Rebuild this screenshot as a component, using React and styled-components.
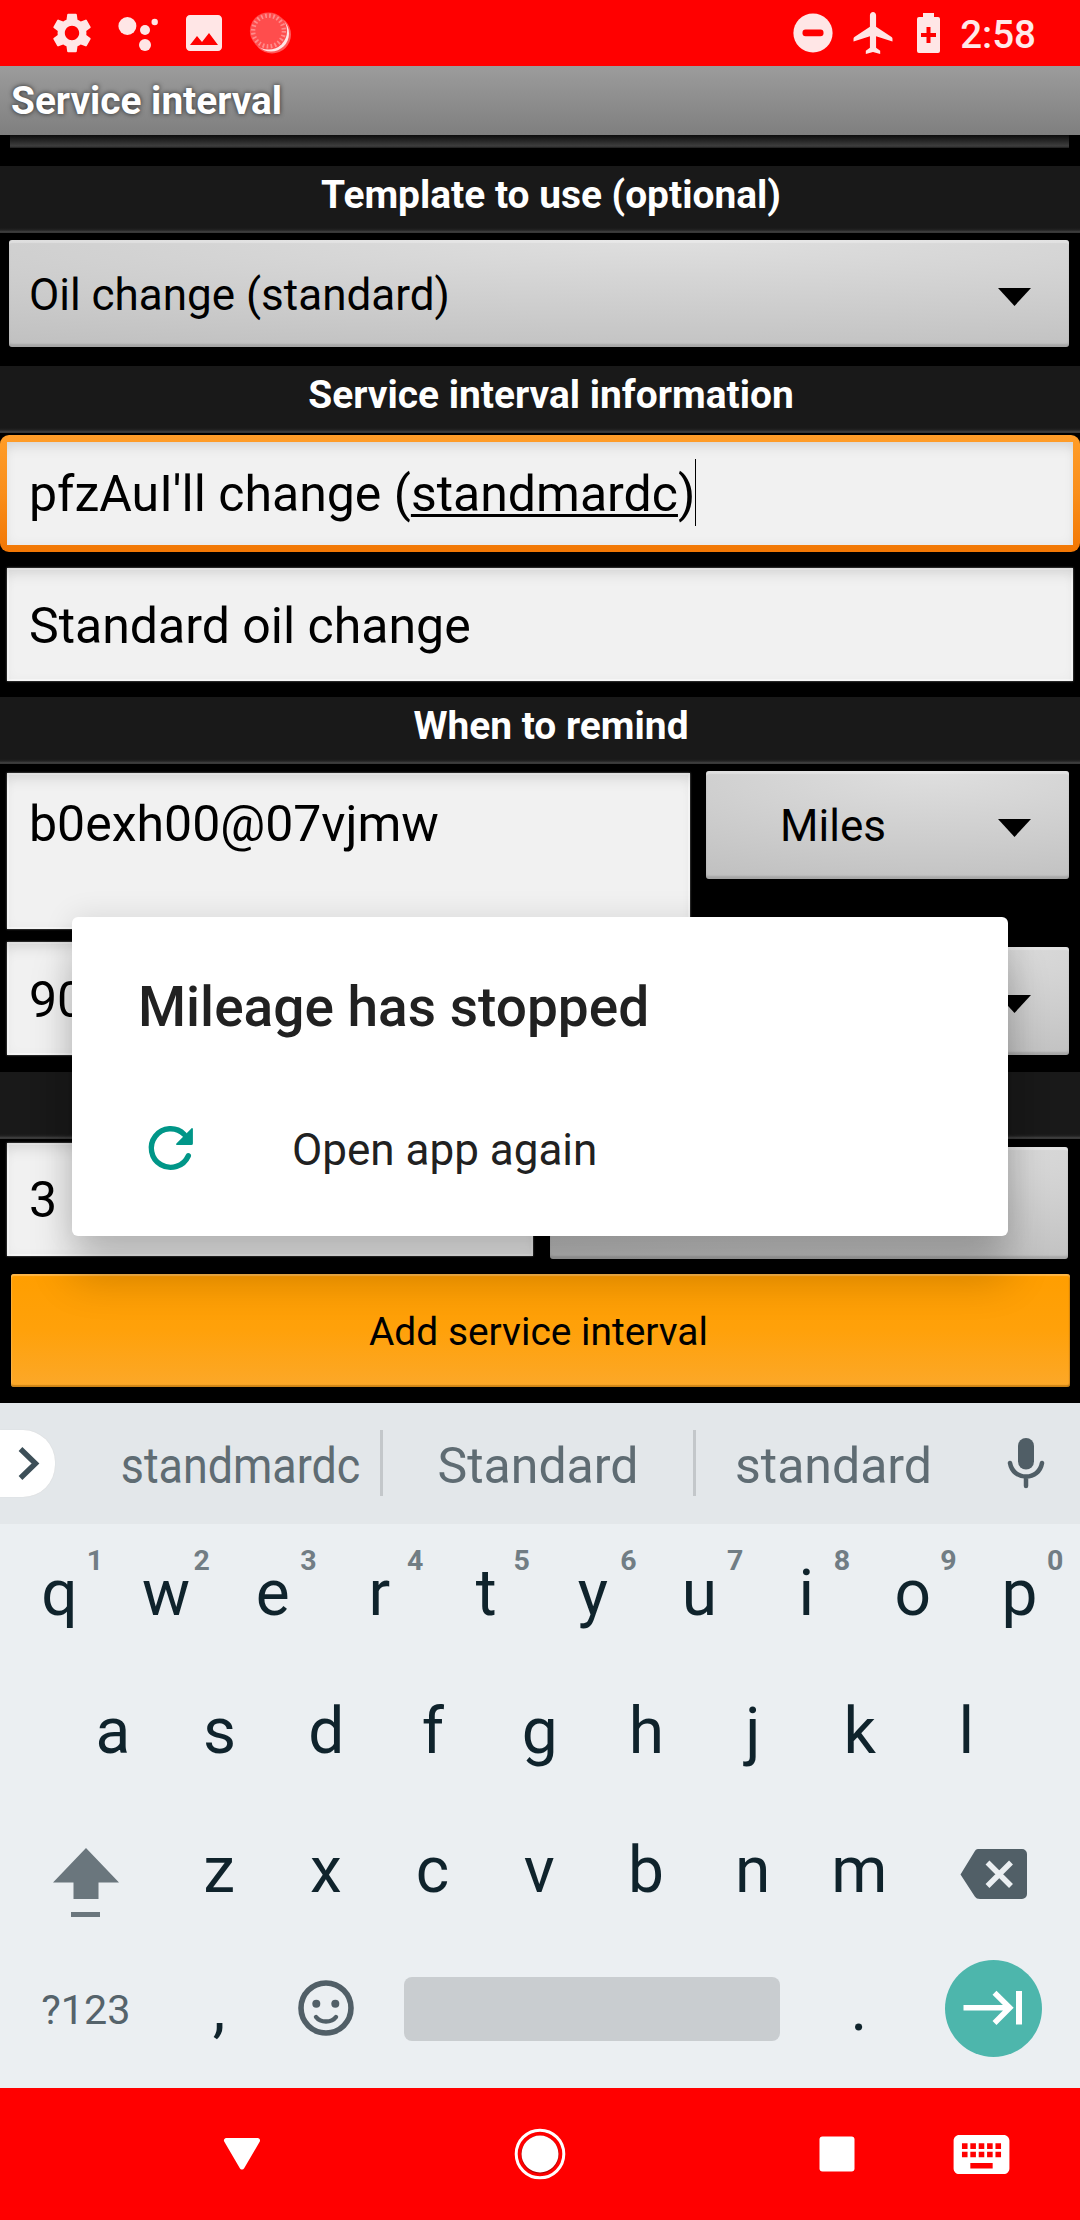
import React from "react";
import styled, { createGlobalStyle, css } from "styled-components";
import { MdSettings, MdPhoto, MdKeyboard } from "react-icons/md";

const GlobalStyle = createGlobalStyle`
  * { box-sizing: border-box; }
  body { margin: 0; background: #000; font-family: Roboto, "Noto Sans", sans-serif; }
  svg { display: block; flex: none; }
`;

const Screen = styled.div`
  position: relative;
  width: 1080px;
  height: 2220px;
  display: flex;
  flex-direction: column;
  background: #000;
  overflow: hidden;
`;

/* ---------- status bar ---------- */

const StatusBar = styled.header`
  height: 66px;
  display: flex;
  justify-content: space-between;
  align-items: center;
  background: #f00;
  color: #ffe6e6;
`;

const StatusGroup = styled.div`
  display: flex;
  align-items: center;
  height: 66px;
  padding-left: ${(p) => p.$start || 0}px;
  padding-right: ${(p) => p.$end || 0}px;
`;

const Clock = styled.span`
  margin-left: 20px;
  padding-top: 3px;
  font-size: 38.5px;
  font-weight: 500;
  line-height: 45px;
  color: #ffe9e9;
`;

/* ---------- app ---------- */

const TitleBar = styled.div`
  height: 69px;
  padding-left: 11px;
  background: linear-gradient(#9c9c9c, #7f7f7f);
  color: #fff;
  font-size: 38.8px;
  font-weight: 700;
  line-height: 69px;
  text-shadow: 0 0 5px rgba(0, 0, 0, 0.75);
`;

const Content = styled.main`
  height: 1268px;
  display: flex;
  flex-direction: column;
  background: #000;
`;

const ScrolledEdge = styled.div`
  height: 13px;
  margin: 0 11px 0 10px;
  background: linear-gradient(#0c0c0c, #3e3e3e 85%, #1c1c1c);
`;

const SectionHeader = styled.h2`
  height: 67px;
  margin: ${(p) => p.$gap}px 0 0;
  padding: 0 0 9px 22px;
  background: linear-gradient(#191919 62px, #222 64px, #444 66px, #2c2c2c 67px);
  color: #fff;
  font-size: 38.9px;
  font-weight: 700;
  line-height: 58px;
  text-align: center;
`;

const FormRow = styled.div`
  display: flex;
  align-items: flex-start;
  margin-top: ${(p) => p.$gap}px;
`;

const bevel = css`
  border-radius: 3px;
  background: radial-gradient(ellipse 125% 108% at 62% 0, #dfdfdf, #c1c1c1);
  box-shadow: inset 0 3px 1px rgba(255, 255, 255, 0.3), inset 0 -3px 2px rgba(0, 0, 0, 0.14);
`;

const Spinner = styled.div`
  ${bevel}
  display: flex;
  align-items: center;
  justify-content: ${(p) => (p.$centered ? "center" : "flex-start")};
  position: relative;
  flex: 1;
  height: ${(p) => p.$height || 108}px;
  margin: ${(p) => p.$drop || 0}px 11px 0 ${(p) => p.$left}px;
  padding: 2px ${(p) => (p.$centered ? 109 : 80)}px 0 ${(p) => (p.$centered ? 0 : 20)}px;
  color: #000;
  font-size: 44px;
  line-height: 52px;
`;

const SpinnerArrow = styled.svg`
  position: absolute;
  right: 38px;
  top: 48px;
`;

const GrayButton = styled.div`
  ${bevel}
  flex: 1;
  height: 112px;
  margin: 4px 12px 0 17px;
`;

const Field = styled.div`
  width: ${(p) => p.$width}px;
  height: ${(p) => p.$height || 113}px;
  margin: ${(p) => p.$drop || 0}px 0 0 7px;
  padding: ${(p) => p.$padTop || 29}px 0 0 22px;
  background: #f1f1f1;
  box-shadow: inset 0 14px 16px -10px rgba(0, 0, 0, 0.13), inset 0 0 12px rgba(0, 0, 0, 0.04),
    inset 0 0 0 2px rgba(255, 255, 255, 0.6), 0 0 2px #777;
  color: #000;
  font-size: 50px;
  line-height: 58px;
  white-space: nowrap;
`;

const FocusRing = styled.div`
  margin-top: 2px;
  height: 117px;
  padding: 7px;
  border-radius: 9px;
  background: linear-gradient(#ff9d29, #f98e1b 50%, #f27704);
`;

const FocusedField = styled.div`
  display: flex;
  align-items: center;
  height: 103px;
  padding: 1px 0 0 22px;
  background: #f1f1f1;
  box-shadow: inset 0 12px 14px -8px rgba(0, 0, 0, 0.1), inset 0 0 12px rgba(0, 0, 0, 0.05);
  color: #000;
  font-size: 50px;
  line-height: 58px;
  white-space: pre;
`;

const Composing = styled.span`
  text-decoration: underline;
  text-decoration-thickness: 3px;
  text-underline-offset: 3px;
  text-decoration-skip-ink: none;
`;

const Caret = styled.span`
  width: 1px;
  height: 67px;
  margin-top: -4px;
  background: #000;
`;

const PrimaryButton = styled.button`
  height: 113px;
  margin: 15px 10px 0 11px;
  padding: 1px 4px 0 0;
  border: 0;
  border-radius: 3px;
  background: linear-gradient(#ff9e00, #ffa10a 50%, #fca829);
  box-shadow: inset 0 2px 1px rgba(255, 210, 140, 0.5), inset 0 -2px 1px rgba(150, 90, 0, 0.45),
    inset 1px 0 1px rgba(255, 210, 140, 0.4), inset -1px 0 1px rgba(150, 90, 0, 0.4);
  color: #000;
  font-family: inherit;
  font-size: 38.9px;
  line-height: 45px;
`;

/* ---------- crash dialog ---------- */

const Dialog = styled.section`
  position: absolute;
  left: 72px;
  top: 917px;
  width: 936px;
  height: 319px;
  padding: 57px 66px 0;
  border-radius: 6px;
  background: #fff;
  box-shadow: 0 42px 44px rgba(0, 0, 0, 0.2), 0 0 30px rgba(0, 0, 0, 0.11);
  color: #212121;
`;

const DialogTitle = styled.h1`
  margin: 0;
  font-size: 55px;
  font-weight: 500;
  line-height: 66px;
`;

const DialogAction = styled.div`
  display: flex;
  align-items: center;
  gap: 88px;
  margin-top: 75px;
  font-size: 44px;
  line-height: 62px;
`;

const ActionLabel = styled.span`
  padding-top: 4px;
`;

/* ---------- keyboard ---------- */

const Keyboard = styled.section`
  height: 685px;
  background: #ebeff2;
`;

const Suggestions = styled.div`
  display: flex;
  align-items: center;
  height: 121px;
  padding-bottom: 1px;
  background: #e3e7ea;
`;

const Expand = styled.div`
  width: 55px;
  height: 67px;
  margin-right: 43px;
  padding: 17px 0 0 16px;
  border-radius: 0 32px 32px 0;
  background: #fff;
  box-shadow: 0 0 1px #ccc;
`;

const Suggestion = styled.div`
  display: flex;
  justify-content: center;
  width: ${(p) => p.$width}px;
  padding-top: 5px;
  color: #5f6c73;
  font-size: 50px;
  line-height: 58px;
`;

const Squeezed = styled.span`
  margin-left: 4px;
  transform: scaleX(0.897);
`;

const Divider = styled.div`
  width: 3px;
  height: 66px;
  background: #c3c7ca;
`;

const KeyRow = styled.div`
  display: flex;
  height: ${(p) => p.$height || 138}px;
  padding-left: ${(p) => p.$inset || 6}px;
`;

const Key = styled.div`
  position: relative;
  display: flex;
  flex: none;
  align-items: center;
  justify-content: center;
  width: ${(p) => p.$width || 106.7}px;
`;

const KeyLabel = styled.span`
  padding-top: 2px;
  color: #0f232c;
  font-size: 64px;
  line-height: 74px;
`;

const Hint = styled.span`
  position: absolute;
  top: 20px;
  left: 69px;
  width: 40px;
  text-align: center;
  color: #717d84;
  font-size: 28.5px;
  font-weight: 700;
  line-height: 34px;
`;

const SymbolsLabel = styled.span`
  padding-top: 4px;
  color: #55636b;
  font-size: 41.3px;
  line-height: 50px;
`;

const SpaceBar = styled.div`
  width: 376px;
  height: 64px;
  margin-top: 2px;
  border-radius: 8px;
  background: #c9cdd0;
`;

const EnterButton = styled.div`
  display: flex;
  align-items: center;
  justify-content: center;
  width: 97px;
  height: 97px;
  border-radius: 50%;
  background: #4db6ac;
`;

/* ---------- navigation bar ---------- */

const NavBar = styled.nav`
  display: flex;
  align-items: center;
  height: 132px;
  padding-left: 222px;
  background: #f00;
  color: #fff;
`;

const NavSlot = styled.div`
  margin-left: ${(p) => p.$gap || 0}px;
`;

const AssistantIcon = () => (
  <svg width="48" height="48" viewBox="114 9 48 48" fill="currentColor">
    <circle cx="127.4" cy="26" r="9" />
    <circle cx="145" cy="30" r="5" />
    <circle cx="154.7" cy="22" r="3.2" />
    <circle cx="145" cy="45" r="6" />
  </svg>
);

const SyncDisc = () => (
  <svg width="48" height="48" viewBox="0 0 48 48">
    <circle cx="26" cy="25.5" r="19" fill="#ff5a5a" />
    <circle cx="25" cy="24.5" r="18" fill="#ffe6e6" />
    <circle cx="22.5" cy="22" r="18.6" fill="#ff4d4d" />
    <circle cx="22.5" cy="22" r="15.4" fill="none" stroke="#ff8c8c" strokeWidth="4.4" strokeDasharray="1.7 2.34" />
  </svg>
);

const DoNotDisturb = () => (
  <svg width="40" height="40" viewBox="0 0 40 40">
    <circle cx="20" cy="20" r="19.6" fill="currentColor" />
    <rect x="9.5" y="16.6" width="21" height="6.6" rx="3" fill="#f00" />
  </svg>
);

const Airplane = () => (
  <svg width="40" height="42" viewBox="1.75 2 19.5 20" preserveAspectRatio="none" fill="currentColor">
    <path d="M21 16v-1.3c0-.4-.15-.6-.45-.8L13 9V3.5c0-.83-.67-1.5-1.5-1.5S10 2.67 10 3.5V9l-7.55 4.9c-.3.2-.45.4-.45.8V16l8-2.5V19l-2 1.5V22l3.5-1 3.5 1v-1.5L13 19v-5.5l8 2.5z" />
  </svg>
);

const Battery = () => (
  <svg width="23" height="40" viewBox="0 0 23 40">
    <path fill="currentColor" d="M6 0h11v4h4a2 2 0 0 1 2 2v32a2 2 0 0 1-2 2H2a2 2 0 0 1-2-2V6a2 2 0 0 1 2-2h4z" />
    <path fill="#f00" d="M9.5 14h4v6H19v4h-5.5v6h-4v-6H4v-4h5.500z" />
  </svg>
);

const ReopenIcon = () => (
  <svg width="66" height="66" viewBox="138 1115 66 66">
    <path
      d="M188.300 1155.800A19.300 19.300 0 1 1 184.200 1134.300"
      fill="none"
      stroke="#009688"
      strokeWidth="5.400"
      strokeLinecap="round"
    />
    <path
      fill="#009688"
      d="M176.400 1143.400l15-15c.6-.6 1.500-.2 1.500.7v14.300a1.600 1.600 0 0 1-1.600 1.600h-14.200c-.9 0-1.300-1-.7-1.600z"
    />
  </svg>
);

const MicIcon = () => (
  <svg width="40" height="54" viewBox="1006 1436 40 54">
    <rect x="1018" y="1438" width="16" height="31.500" rx="8" fill="#505e66" />
    <path
      d="M1010 1463c1.500 8.500 8 13.600 16 13.600s14.500-5.100 16-13.600M1026 1477v9"
      fill="none"
      stroke="#505e66"
      strokeWidth="4.500"
      strokeLinecap="round"
    />
  </svg>
);

const ShiftIcon = () => (
  <svg width="160" height="139" viewBox="0 0 160 139" fill="#6a767d">
    <path d="M80 48l33 34.500H92.500V99h-25V82.500H47z" />
    <rect x="65" y="112" width="29" height="5" />
  </svg>
);

const BackspaceIcon = () => (
  <svg width="160" height="139" viewBox="0 0 160 139">
    <path
      fill="#515f67"
      d="M65 49h44a5 5 0 0 1 5 5v40a5 5 0 0 1-5 5H67c-2.500 0-4-.8-5.200-2.500L47.500 74.500 61.300 52c1-1.900 2.200-3 3.700-3z"
    />
    <path d="M74.500 62.500l23.500 23.500M98 62.500L74.500 86" stroke="#ebeff2" strokeWidth="5.500" />
  </svg>
);

const EmojiIcon = () => (
  <svg width="56" height="56" viewBox="-28 -28 56 56">
    <circle r="25" fill="none" stroke="#515f67" strokeWidth="5.600" />
    <circle cx="-9.700" cy="-4.300" r="4" fill="#515f67" />
    <circle cx="9.300" cy="-4.300" r="4" fill="#515f67" />
    <path d="M-10 9c4.500 6 15.500 6 20 0" fill="none" stroke="#515f67" strokeWidth="4.400" strokeLinecap="round" />
  </svg>
);

const NextIcon = () => (
  <svg width="60" height="36" viewBox="0 0 60 36" fill="none" stroke="#fff" strokeWidth="5.600">
    <path d="M0.500 17.800h46M31.500 2.700L46.700 17.800 31.500 33" />
    <path d="M56 1v33.500" strokeWidth="6" />
  </svg>
);

const DownArrow = () => (
  <SpinnerArrow width="33" height="18" viewBox="0 0 33 18">
    <path d="M0 0h33L16.500 18z" fill="#000" />
  </SpinnerArrow>
);

const TOP_KEYS = "qwertyuiop".split("");
const HINTS = "1234567890".split("");
const HOME_KEYS = "asdfghjkl".split("");
const BOTTOM_KEYS = "zxcvbnm".split("");

export default function App() {
  return (
    <>
      <GlobalStyle />
      <Screen>
        <StatusBar>
          <StatusGroup $start={48}>
            <MdSettings size={48} />
            <StatusGroup $start={18} $end={18}>
              <AssistantIcon />
            </StatusGroup>
            <MdPhoto size={48} />
            <StatusGroup $start={18}>
              <SyncDisc />
            </StatusGroup>
          </StatusGroup>
          <StatusGroup $end={44}>
            <DoNotDisturb />
            <StatusGroup $start={20} $end={24}>
              <Airplane />
            </StatusGroup>
            <Battery />
            <Clock>2:58</Clock>
          </StatusGroup>
        </StatusBar>

        <TitleBar>Service interval</TitleBar>

        <Content>
          <ScrolledEdge />
          <SectionHeader $gap={18}>Template to use (optional)</SectionHeader>
          <FormRow $gap={7}>
            <Spinner $left={9} $height={107}>
              Oil change (standard)
              <DownArrow />
            </Spinner>
          </FormRow>
          <SectionHeader $gap={19}>Service interval information</SectionHeader>
          <FocusRing>
            <FocusedField>
              <span>
                pfzAuI'll change (<Composing>standmardc</Composing>)
              </span>
              <Caret />
            </FocusedField>
          </FocusRing>
          <FormRow $gap={16}>
            <Field $width={1066}>Standard oil change</Field>
          </FormRow>
          <SectionHeader $gap={16}>When to remind</SectionHeader>
          <FormRow $gap={7}>
            <Field $width={683} $height={156} $drop={2} $padTop={22}>
              b0exh00@07vjmw
            </Field>
            <Spinner $left={16} $centered>
              Miles
              <DownArrow />
            </Spinner>
          </FormRow>
          <FormRow $gap={13}>
            <Field $width={683}>90</Field>
            <Spinner $left={16} $drop={5} $centered>
              <DownArrow />
            </Spinner>
          </FormRow>
          <SectionHeader $gap={17} />
          <FormRow $gap={4}>
            <Field $width={526} $padTop={28}>
              3
            </Field>
            <GrayButton />
          </FormRow>
          <PrimaryButton>Add service interval</PrimaryButton>
        </Content>

        <Keyboard>
          <Suggestions>
            <Expand>
              <svg width="26" height="33" viewBox="0 0 26 33">
                <path d="M4.500 2L19.500 16.500 4.500 31" fill="none" stroke="#3d4f58" strokeWidth="5.400" />
              </svg>
            </Expand>
            <Suggestion $width={282}>
              <Squeezed>standmardc</Squeezed>
            </Suggestion>
            <Divider />
            <Suggestion $width={310}>Standard</Suggestion>
            <Divider />
            <Suggestion $width={275}>standard</Suggestion>
            <NavSlot $gap={35}>
              <MicIcon />
            </NavSlot>
          </Suggestions>
          <KeyRow>
            {TOP_KEYS.map((k, i) => (
              <Key key={k}>
                <KeyLabel>{k}</KeyLabel>
                <Hint>{HINTS[i]}</Hint>
              </Key>
            ))}
          </KeyRow>
          <KeyRow $inset={59.500}>
            {HOME_KEYS.map((k) => (
              <Key key={k}>
                <KeyLabel>{k}</KeyLabel>
              </Key>
            ))}
          </KeyRow>
          <KeyRow $height={139}>
            <Key $width={159.800}>
              <ShiftIcon />
            </Key>
            {BOTTOM_KEYS.map((k) => (
              <Key key={k}>
                <KeyLabel>{k}</KeyLabel>
              </Key>
            ))}
            <Key $width={161}>
              <BackspaceIcon />
            </Key>
          </KeyRow>
          <KeyRow>
            <Key $width={159.800}>
              <SymbolsLabel>?123</SymbolsLabel>
            </Key>
            <Key>
              <KeyLabel>,</KeyLabel>
            </Key>
            <Key>
              <EmojiIcon />
            </Key>
            <Key $width={426.500}>
              <SpaceBar />
            </Key>
            <Key>
              <KeyLabel>.</KeyLabel>
            </Key>
            <Key $width={162}>
              <EnterButton>
                <NextIcon />
              </EnterButton>
            </Key>
          </KeyRow>
        </Keyboard>

        <NavBar>
          <svg width="40" height="34" viewBox="0 0 40 34">
            <path
              d="M4.500 3.500h31L20 30z"
              fill="currentColor"
              stroke="currentColor"
              strokeWidth="5"
              strokeLinejoin="round"
            />
          </svg>
          <NavSlot $gap={252}>
            <svg width="52" height="52" viewBox="0 0 52 52">
              <circle cx="26" cy="26" r="23.800" fill="none" stroke="#fff" strokeWidth="3" />
              <circle cx="26" cy="26.600" r="19" fill="#b30000" />
              <circle cx="26" cy="26" r="18.500" fill="#fff" />
            </svg>
          </NavSlot>
          <NavSlot $gap={253}>
            <svg width="36" height="36" viewBox="0 0 36 36">
              <rect x="0.500" y="0.500" width="35" height="35" rx="3" fill="#fff" />
            </svg>
          </NavSlot>
          <NavSlot $gap={92.500}>
            <MdKeyboard size={67} />
          </NavSlot>
        </NavBar>

        <Dialog>
          <DialogTitle>Mileage has stopped</DialogTitle>
          <DialogAction>
            <ReopenIcon />
            <ActionLabel>Open app again</ActionLabel>
          </DialogAction>
        </Dialog>
      </Screen>
    </>
  );
}
